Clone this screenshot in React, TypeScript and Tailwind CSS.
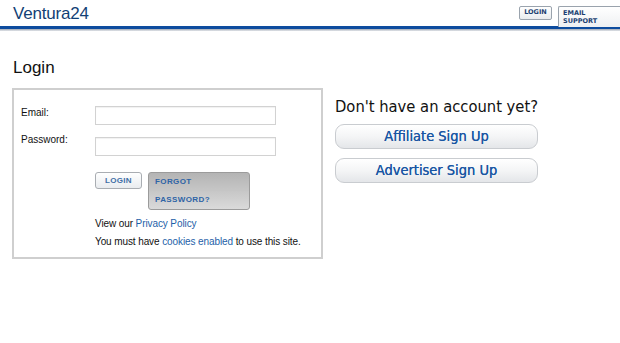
import React from "react";

export default function App() {
  return (
    <div className="w-[620px] h-[343px] bg-white overflow-hidden relative" style={{ fontFamily: '"Liberation Sans", Arial, sans-serif' }}>
      {/* header */}
      <div className="h-[26px] flex items-start justify-between pl-[13px]">
        <div className="text-[17px] leading-none text-[#123f75] mt-[5px] tracking-[-0.2px]">Ventura24</div>
        <div className="flex items-start gap-[6px] mt-[6px]">
          <div className="h-[14px] w-[33px] border border-[#9aa3ad] rounded-[2px] bg-gradient-to-b from-white to-[#e8ebee] text-[6.5px] font-bold text-[#1b3f72] flex items-center justify-center" style={{ fontFamily: '"DejaVu Sans", sans-serif' }}>LOGIN</div>
          <div className="h-[21px] w-[62px] border-l border-t border-[#9aa3ad] rounded-tl-[2px] bg-gradient-to-b from-white to-[#eef0f2] text-[6.5px] leading-[8px] font-bold text-[#1b3f72] pl-[4px] pt-[2px]" style={{ fontFamily: '"DejaVu Sans", sans-serif' }}>EMAIL<br />SUPPORT</div>
        </div>
      </div>
      <div className="h-[3px] bg-[#0d4c9e]" />
      <div className="h-[2px] bg-gradient-to-b from-[#9fa7b3] to-[#e6e8ec]" />

      <div className="flex pl-[12px] pt-[28px]">
        {/* left */}
        <div className="w-[311px] shrink-0">
          <div className="text-[17px] leading-none text-[#111] pl-[1px]">Login</div>
          <div className="mt-[12px] h-[171px] border-2 border-[#cfcfcf] pl-[7px] pt-[16px] text-[10px] text-[#111]">
            <div className="flex items-center">
              <div className="w-[74px] -mt-[6px]">Email:</div>
              <div className="w-[181px] h-[19px] border border-[#d2d2d2] bg-white shadow-[inset_0_1px_1px_rgba(0,0,0,0.06)]" />
            </div>
            <div className="flex items-center mt-[12px]">
              <div className="w-[74px] -mt-[15px]">Password:</div>
              <div className="w-[181px] h-[19px] border border-[#d2d2d2] bg-white shadow-[inset_0_1px_1px_rgba(0,0,0,0.06)]" />
            </div>
            <div className="flex items-start mt-[16px] pl-[74px] gap-[6px]">
              <div className="w-[47px] h-[17px] rounded-[3px] border border-[#a9adb2] bg-gradient-to-b from-white to-[#e9ecef] text-[8px] font-bold text-[#3e6fa6] flex items-center justify-center tracking-[0.3px]">LOGIN</div>
              <div className="w-[102px] h-[38px] rounded-[3px] border border-[#9b9b9b] bg-gradient-to-b from-[#b4b4b4] to-[#dadada] text-[8px] font-bold text-[#2e64a6] tracking-[0.4px]">
                <div className="h-[18px] pl-[6px] flex items-center border-b border-[#c5c5c5]">FORGOT</div>
                <div className="h-[18px] pl-[6px] flex items-center">PASSWORD?</div>
              </div>
            </div>
            <div className="pl-[74px] mt-[8px] leading-[12px] whitespace-nowrap tracking-[-0.1px]">View our <span className="text-[#1e5fa8]">Privacy Policy</span></div>
            <div className="pl-[74px] mt-[6px] leading-[12px] whitespace-nowrap tracking-[-0.1px]">You must have <span className="text-[#1e5fa8]">cookies enabled</span> to use this site.</div>
          </div>
        </div>
        {/* right */}
        <div className="ml-[12px] pt-[40px]" style={{ fontFamily: '"DejaVu Sans Condensed", "DejaVu Sans", sans-serif' }}>
          <div className="text-[16.4px] leading-none text-[#111] whitespace-nowrap">Don't have an account yet?</div>
          <div className="mt-[9px] w-[203px] h-[25px] rounded-[9px] border border-[#c9ccd0] bg-gradient-to-b from-white via-[#f4f5f6] to-[#e4e6e9] text-[14.5px] text-[#1a56a3] flex items-center justify-center [text-shadow:0_0_0.3px_#1a56a3]">Affiliate Sign Up</div>
          <div className="mt-[9px] w-[203px] h-[25px] rounded-[9px] border border-[#c9ccd0] bg-gradient-to-b from-white via-[#f4f5f6] to-[#e4e6e9] text-[14.5px] text-[#1a56a3] flex items-center justify-center [text-shadow:0_0_0.3px_#1a56a3]">Advertiser Sign Up</div>
        </div>
      </div>
    </div>
  );
}
